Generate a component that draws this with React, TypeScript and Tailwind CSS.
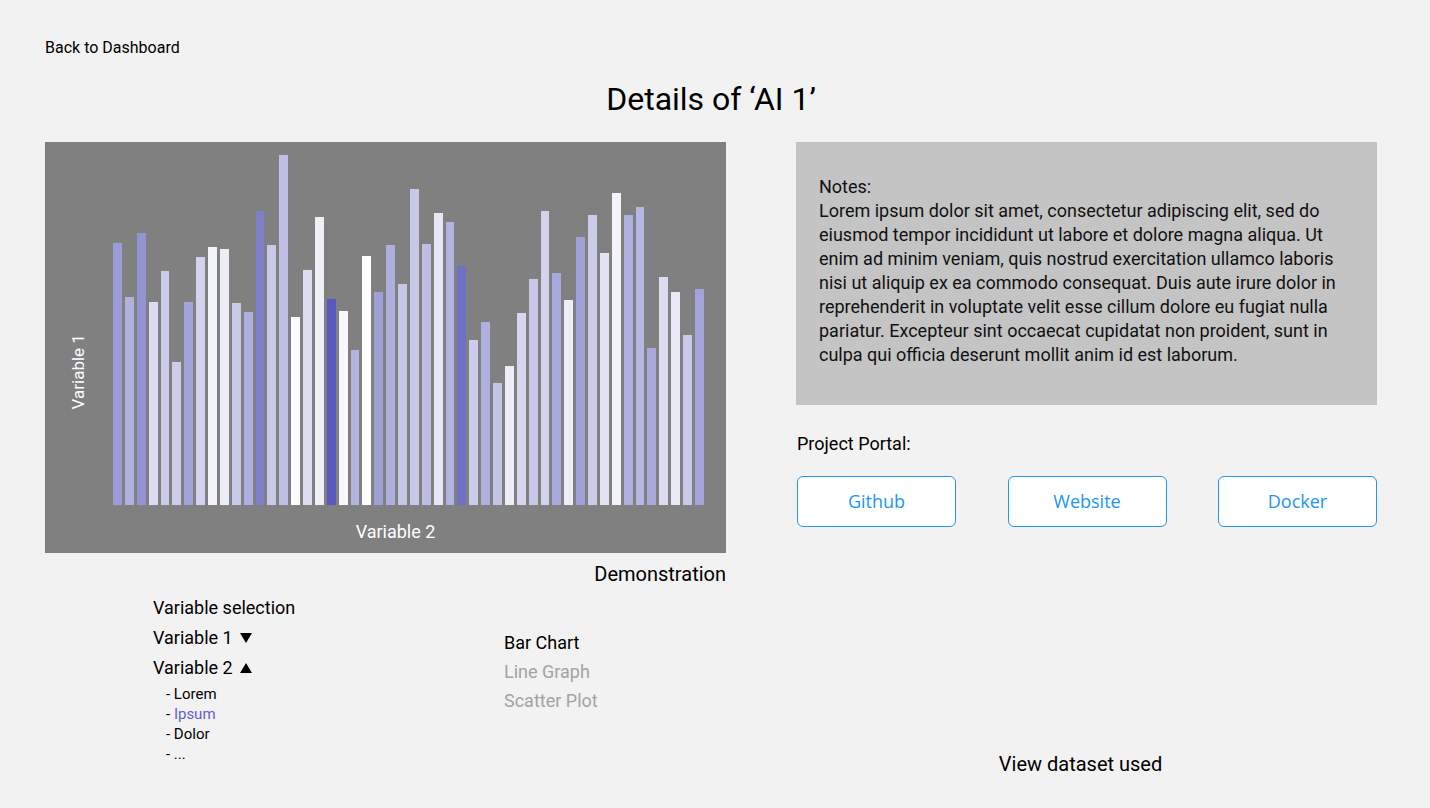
import React from 'react';

const bars: [number, string][] = [
  [262, '#9c9cd8'], [208, '#b1b1e0'], [272, '#9494d4'], [203, '#dcdcf2'], [234, '#cbcbea'],
  [143, '#cdcdeb'], [203, '#a3a3dc'], [248, '#d3d3ef'], [258, '#f2f2fa'], [256, '#ededf8'],
  [202, '#c8c8e8'], [193, '#aeaee0'], [294, '#7f7fca'], [260, '#c9c9e9'], [350, '#c0c0e5'],
  [188, '#fbfbfd'], [235, '#dcdcf0'], [288, '#efeff8'], [206, '#5757bf'], [194, '#f7f7fc'],
  [155, '#b4b4e1'], [249, '#ffffff'], [213, '#9f9fd8'], [260, '#b0b0e0'], [221, '#c6c6e7'],
  [316, '#c8c8e8'], [261, '#bebee4'], [292, '#e6e6f5'], [283, '#b3b3e0'], [239, '#6f6fc5'],
  [165, '#cbcbea'], [183, '#b0b0df'], [122, '#c5c5e7'], [139, '#ededf8'], [192, '#d6d6ef'],
  [226, '#c8c8e8'], [294, '#d3d3ee'], [232, '#a9a9dd'], [205, '#eeeef8'], [268, '#a0a0d8'],
  [290, '#cbcbea'], [252, '#e3e3f4'], [312, '#f3f3fa'], [290, '#b0b0e0'], [298, '#b6b6e2'],
  [157, '#a9a9dc'], [228, '#dcdcf1'], [213, '#e8e8f6'], [170, '#c8c8e9'], [216, '#a4a4db'],
];

function Triangle({ up }: { up?: boolean }) {
  return (
    <svg width="12" height="10" viewBox="0 0 12 10" className="ml-[7px] inline-block">
      {up ? <path d="M6 0 L12 10 L0 10 Z" fill="#000" /> : <path d="M0 0 L12 0 L6 10 Z" fill="#000" />}
    </svg>
  );
}

function PortalButton({ label }: { label: string }) {
  return (
    <button className="w-[159px] h-[51px] bg-white border border-[#2196f3] rounded-[6px] text-[#2196f3] text-[18px] font-['Open_Sans',sans-serif]">
      {label}
    </button>
  );
}

export default function App() {
  return (
    <div className="min-h-screen bg-[#f2f2f2] text-black font-['Roboto',sans-serif] pl-[45px] pr-[53px] pt-[36px]">
      <div className="text-[16px] leading-6">Back to Dashboard</div>
      <h1 className="text-center text-[32px] leading-9 mt-[21px]">Details of ‘AI 1’</h1>

      <div className="flex gap-[70px] mt-[25px]">
        {/* left column */}
        <div className="w-[681px]">
          <div className="h-[411px] bg-[#808080] flex flex-col">
            <div className="flex h-[363px]">
              <div className="w-[68px] flex items-center justify-center pt-[97px]">
                <span className="-rotate-90 whitespace-nowrap text-white text-[17px]">Variable 1</span>
              </div>
              <div className="w-[591px] h-full flex items-end gap-[3px]">
                {bars.map(([h, c], i) => (
                  <div key={i} className="flex-1" style={{ height: h, backgroundColor: c }} />
                ))}
              </div>
            </div>
            <div className="flex-1 flex items-center justify-center pl-[20px] pt-[4px] text-white text-[18px]">
              Variable 2
            </div>
          </div>
          <div className="text-right text-[20px] leading-6 mt-[9px]">Demonstration</div>

          <div className="flex pl-[108px] mt-[7px]">
            <div className="w-[351px]">
              <div className="text-[18px] leading-[30px]">Variable selection</div>
              <div className="text-[18px] leading-[30px] flex items-center">
                Variable 1 <Triangle />
              </div>
              <div className="text-[18px] leading-[30px] flex items-center">
                Variable 2 <Triangle up />
              </div>
              <ul className="pl-[13px] mt-px text-[15px] leading-5">
                <li>- Lorem</li>
                <li>
                  - <span className="text-[#5f5fd4]">Ipsum</span>
                </li>
                <li>- Dolor</li>
                <li>- ...</li>
              </ul>
            </div>
            <div className="pt-[35px] text-[18px] leading-[29px]">
              <div>Bar Chart</div>
              <div className="text-[#a3a3a3]">Line Graph</div>
              <div className="text-[#a3a3a3]">Scatter Plot</div>
            </div>
          </div>
        </div>

        {/* right column */}
        <div className="w-[581px]">
          <div className="h-[263px] bg-[#c4c4c4] pl-[23px] pr-[28px] pt-[33px] text-[18px] leading-6 text-[#111]">
            <div>Notes:</div>
            <p>
              Lorem ipsum dolor sit amet, consectetur adipiscing elit, sed do eiusmod tempor incididunt ut labore et
              dolore magna aliqua. Ut enim ad minim veniam, quis nostrud exercitation ullamco laboris nisi ut aliquip ex
              ea commodo consequat. Duis aute irure dolor in reprehenderit in voluptate velit esse cillum dolore eu
              fugiat nulla pariatur. Excepteur sint occaecat cupidatat non proident, sunt in culpa qui officia deserunt
              mollit anim id est laborum.
            </p>
          </div>
          <div className="mt-[27px] text-[18px] leading-6 pl-px">Project Portal:</div>
          <div className="flex justify-between mt-[20px] pl-px">
            <PortalButton label="Github" />
            <PortalButton label="Website" />
            <PortalButton label="Docker" />
          </div>
          <div className="mt-[225px] text-center pr-[12px] text-[20px] leading-6">View dataset used</div>
        </div>
      </div>
    </div>
  );
}
